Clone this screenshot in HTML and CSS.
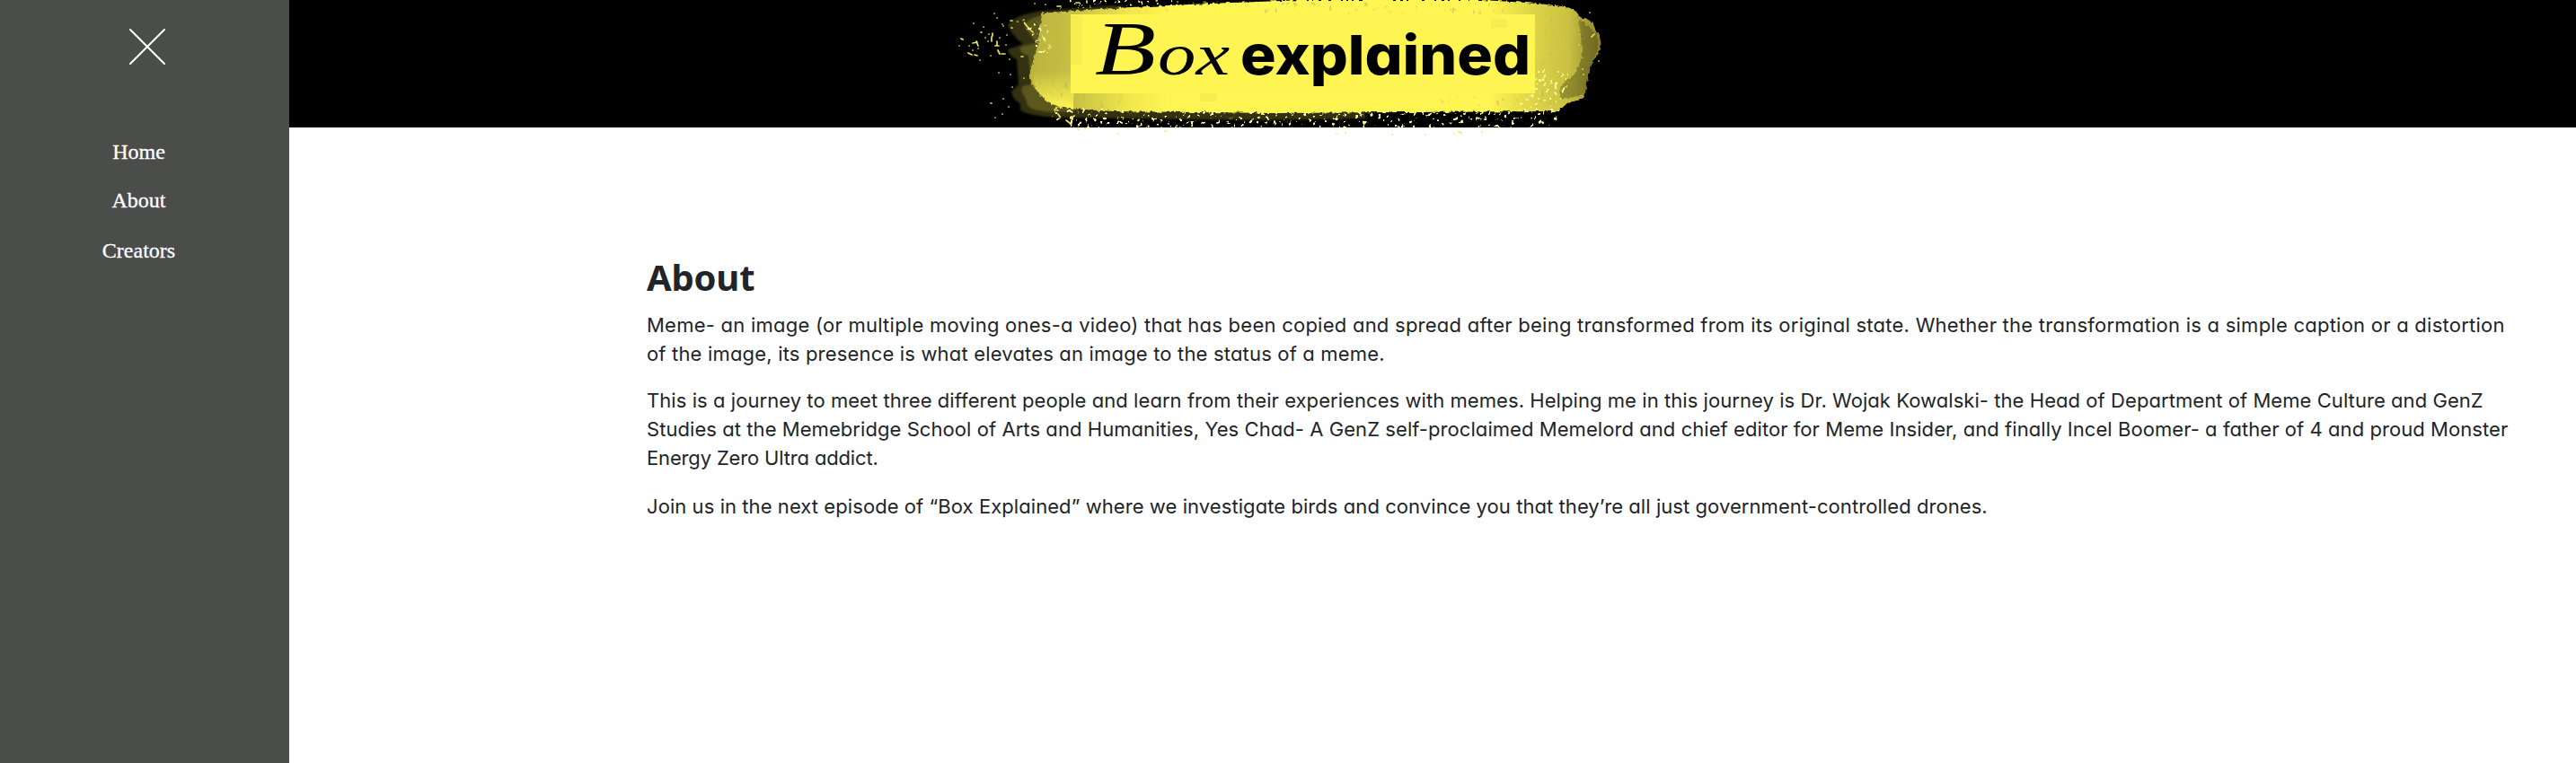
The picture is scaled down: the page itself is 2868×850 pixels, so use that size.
FILE: index.html
```html
<!DOCTYPE html>
<html lang="en">
<head>
<meta charset="utf-8">
<title>Box Explained - About</title>
<link rel="stylesheet" href="styles.css">
</head>
<body>
<div class="layout">
  <nav class="sidebar">
    <svg class="close" viewBox="0 0 42 42" aria-label="Close menu"><path d="M2 2l38 38M40 2L2 40"/></svg>
    <a class="nav-link">Home</a>
    <a class="nav-link">About</a>
    <a class="nav-link nav-link-last">Creators</a>
  </nav>
  <div class="page">
    <header class="banner">
      <svg class="logo" viewBox="1040 0 760 156" role="img" aria-label="Box explained">
        <defs>
          <linearGradient id="paint" gradientUnits="userSpaceOnUse" x1="1147" y1="0" x2="1785" y2="0">
            <stop offset="0" stop-color="#bab23d"/><stop offset=".08" stop-color="#c9c143"/>
            <stop offset=".17" stop-color="#efe64d"/><stop offset=".24" stop-color="#fff552"/>
            <stop offset=".8" stop-color="#fff552"/><stop offset=".88" stop-color="#dcd347"/>
            <stop offset=".94" stop-color="#c9c142"/><stop offset="1" stop-color="#857f2c"/>
          </linearGradient>
          <linearGradient id="glow" x1="0" y1="0" x2="0" y2="1">
            <stop offset=".3" stop-color="#fff552" stop-opacity="0"/><stop offset="1" stop-color="#fff552"/>
          </linearGradient>
          <filter id="rough" x="-5%" y="-10%" width="110%" height="120%">
            <feTurbulence type="fractalNoise" baseFrequency=".22" numOctaves="2" seed="4"/>
            <feDisplacementMap in="SourceGraphic" scale="5" xChannelSelector="R" yChannelSelector="G"/>
            <feGaussianBlur stdDeviation=".5"/>
          </filter>
          <filter id="speckle" x="0" y="0" width="100%" height="100%">
            <feTurbulence type="fractalNoise" baseFrequency=".23" numOctaves="2" seed="9"/>
            <feColorMatrix values="0 0 0 0 1  0 0 0 0 .96  0 0 0 0 .32  14 0 0 0 -8.8"/>
            <feComposite in2="SourceGraphic" operator="in"/>
          </filter>
          <filter id="pits" x="0" y="0" width="100%" height="100%">
            <feTurbulence type="fractalNoise" baseFrequency=".2 .12" numOctaves="2" seed="21"/>
            <feColorMatrix values="0 0 0 0 .5  0 0 0 0 .47  0 0 0 0 .12  7 0 0 0 -4.5"/>
            <feComposite in2="SourceGraphic" operator="in"/>
          </filter>
        </defs>
        <path class="smear" d="M1122 28Q1128 17 1160 12L1240 6L1300 20L1520 124L1520 132L1400 134L1180 131Q1142 129 1136 122L1136 116Q1127 110 1126 102L1134 94L1132 66Q1123 62 1122 55L1139 49Q1126 39 1122 28Z"/>
        <path class="smear" d="M1140 29Q1144 20 1160 17L1200 60L1195 124Q1150 127 1144 117L1141 108Q1135 102 1139 96L1148 94L1145 62Q1134 60 1136 52L1154 48Z"/>
        <path d="M1160 15Q1250 7 1400 2L1450 0H1650L1700 3Q1735 6 1744 8Q1758 12 1758 19Q1772 20 1776 32Q1788 50 1778 62Q1770 72 1768 88L1764 108Q1756 113 1746 114L1735 124L1420 126L1240 124L1190 121Q1168 118 1157 105Q1145 92 1147 79Q1151 66 1155 52Z" fill="url(#paint)" filter="url(#rough)"/>
        <path d="M1150 76L1195 60V122Q1168 118 1157 104Q1148 92 1150 76Z" fill="url(#glow)" filter="url(#rough)"/>
        <path class="shade" d="M1758 22Q1786 38 1778 58Q1768 76 1766 104L1738 112Q1730 98 1752 84L1762 64Z" filter="url(#rough)"/>
        <path class="texture" d="M1160 18L1192 14H1310V1H1420L1250 10Z M1158 20H1192V104H1250V120L1185 119Q1153 105 1150 82Z M1400 3H1700L1750 30L1748 90L1730 118H1600V106H1709V16H1400Z" filter="url(#pits)"/>
        <g filter="url(#speckle)">
          <path d="M1172 119L1300 124H1735L1732 140L1690 142H1180Q1165 130 1172 119Z"/>
          <path d="M1186 0H1310V4L1180 10Z"/>
          <path d="M1700 72L1748 82L1738 124H1690Z"/>
          <path d="M1138 22L1165 26L1172 56L1158 62Z"/>
        </g>
        <path class="drops" d="M1084 26h.1M1092 36h1M1101 38h.1M1107 15h.1M1110 20h.1M1095 30h.1M1104 41l0 5M1105 37v3M1097 42h.1M1087 46l2 5M1083 48l5 -1M1079 51h.1M1070 43l2 1M1068 51h.1M1078 59l4 2M1085 61l3 1M1083 56h.1M1089 54h.1M1100 46h.1M1108 51h4M1110 46v4M1115 60h4M1111 56l2 4M1103 62h.1M1113 42h.1M1121 39h.1M1116 27h.1M1125 23h2M1126 31h1M1141 26l3 4M1148 34l2 2M1137 63h2M1120 50h.1M1124 66h.1M1117 29h.1M1091 67h.1M1112 81h.1M1125 83h.1M1127 97h.1M1103 115h1M1117 110h.1M1123 119h.1M1108 131h.1M1116 127h.1M1140 87h.1M1152 4h.1M1161 14h.1M1140 22h.1M1133 24h.1M1168 50l2 3M1772 41l3 -3M1770 14h.1M1758 50h.1M1780 68h.1M1763 83h.1M1762 77h.1M1164 5h.1M1177 7h4M1198 3h4M1210 1v2M1174 122l4 1M1178 127l2 3M1187 134l4 3M1192 132l4 -3M1200 144h1M1208 143h1.5M1245 149h.1M1256 143h.1M1297 146h1M1327 143h.1M1488 149h.1M1498 148h.1M1550 150h.1M1587 150h.1M1624 147l3 1M1619 149h.1M1650 147h.1"/>
        <rect x="1192" y="16" width="517" height="88" class="plate"/>
        <rect x="1192" y="17" width="13" height="55" class="fade"/>
        <rect x="1336" y="104" width="19" height="9" class="fade"/>
        <rect x="1660" y="21" width="18" height="10" class="fade"/>
        <text class="script"><tspan class="cap" y="83" x="1219" textLength="68" lengthAdjust="spacingAndGlyphs">B</tspan><tspan x="1289" y="83" textLength="80" lengthAdjust="spacingAndGlyphs">ox</tspan></text>
        <text class="bold" x="1381" y="83" textLength="323" lengthAdjust="spacingAndGlyphs">explained</text>
      </svg>
    </header>
    <main class="about">
      <h1>About</h1>
      <p><span class="l1">Meme- an image (or multiple moving ones-a video) that has been copied and spread after being transformed from its original state. Whether the transformation is a simple caption or a distortion</span><br><span class="l2">of the image, its presence is what elevates an image to the status of a meme.</span></p>
      <p><span class="l3">This is a journey to meet three different people and learn from their experiences with memes. Helping me in this journey is Dr. Wojak Kowalski- the Head of Department of Meme Culture and GenZ</span><br><span class="l4">Studies at the Memebridge School of Arts and Humanities, Yes Chad- A GenZ self-proclaimed Memelord and chief editor for Meme Insider, and finally Incel Boomer- a father of 4 and proud Monster</span><br><span class="l5">Energy Zero Ultra addict.</span></p>
      <p><span class="l6">Join us in the next episode of “Box Explained” where we investigate birds and convince you that they’re all just government-controlled drones.</span></p>
    </main>
  </div>
</div>
</body>
</html>
```
FILE: styles.css
```css
* { box-sizing: border-box; }
body { margin: 0; background: #fff; color: #212529; }
.layout { display: flex; height: 850px; overflow: hidden; }
.sidebar { width: 322px; background: #4b4d4b; display: flex; flex-direction: column; align-items: center; padding: 31px 13px 0 0; }
.close { width: 42px; height: 42px; margin: 0 0 82px 18px; fill: none; stroke: #fff; stroke-width: 2; stroke-linecap: round; }
.nav-link { font: 24px/28px "Liberation Serif", serif; color: #fff; margin-bottom: 26px; -webkit-text-stroke: .3px #fff; }
.nav-link + .nav-link { margin-bottom: 28px; }
.page { flex: 1; }
.banner { height: 142px; background: #000; padding-left: 718px; }
.logo { display: block; width: 760px; height: 156px; }
.smear { fill: #fff552; opacity: .2; filter: blur(.8px); }
.shade { fill: #302e10; opacity: .35; }
.texture { opacity: .6; }
.drops { fill: none; stroke: #efe650; stroke-width: 1.7; stroke-linecap: round; }
.plate { fill: #fff552; }
.fade { fill: #e8df4c; opacity: .35; }
.script { font: italic 66px "Liberation Serif", serif; fill: #000; }
.cap { font-size: 84px; }
.bold { font: 800 61px Inter, sans-serif; font-feature-settings: "cv11"; fill: #000; }
.about { padding: 143px 0 0 398px; white-space: nowrap; }
h1 { margin: 0 0 13px; font: 700 40px/48px "Noto Sans", sans-serif; letter-spacing: -.2px; }
p { margin: 0 0 20px; font: 22px/32px Inter, sans-serif; font-feature-settings: "cv11"; }
p:last-child { padding-top: 2px; }
.l1 { letter-spacing: .246px; }
.l2 { letter-spacing: .177px; }
.l3 { letter-spacing: .062px; }
.l4 { letter-spacing: .064px; }
.l5 { letter-spacing: -.16px; }
.l6 { letter-spacing: .07px; }
```
